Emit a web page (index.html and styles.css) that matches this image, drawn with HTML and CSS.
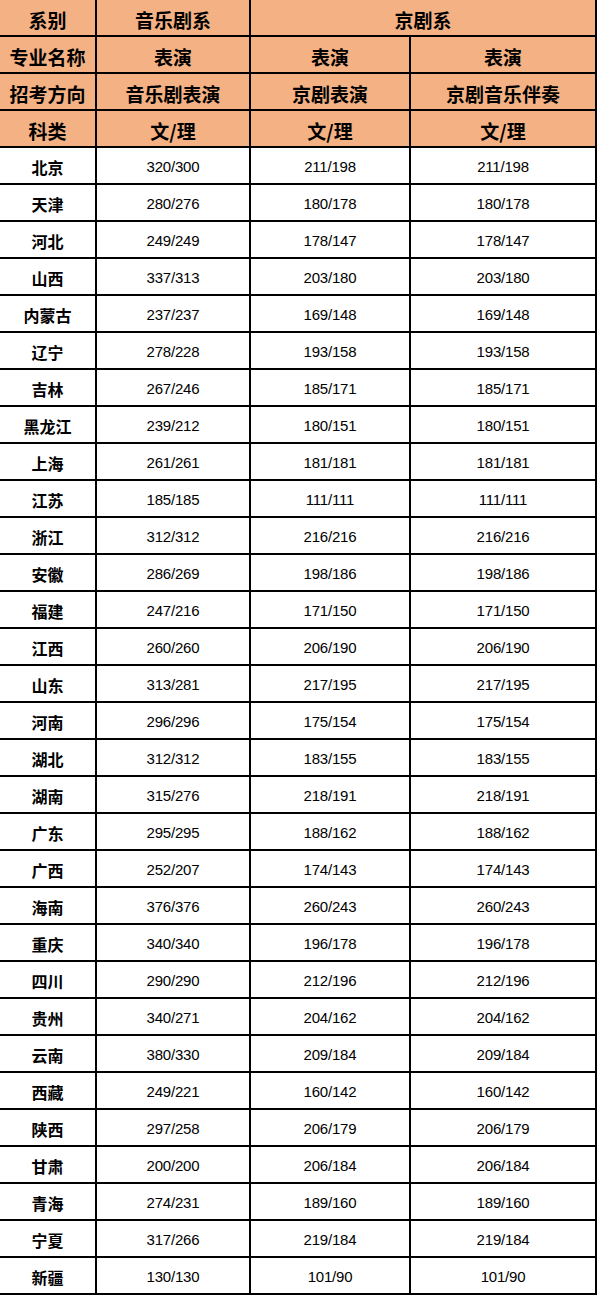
FILE: index.html
```html
<!DOCTYPE html>
<html lang="zh">
<head>
<meta charset="utf-8">
<title>录取分数线</title>
<link rel="stylesheet" href="styles.css">
</head>
<body>
<table class="score">
<colgroup>
<col class="c1"><col class="c2"><col class="c3"><col class="c4">
</colgroup>
<thead>
<tr><th>系别</th><th>音乐剧系</th><th colspan="2">京剧系</th></tr>
<tr><th>专业名称</th><th>表演</th><th>表演</th><th>表演</th></tr>
<tr><th>招考方向</th><th>音乐剧表演</th><th>京剧表演</th><th>京剧音乐伴奏</th></tr>
<tr><th>科类</th><th>文/理</th><th>文/理</th><th>文/理</th></tr>
</thead>
<tbody>
<tr><td class="prov">北京</td><td>320/300</td><td>211/198</td><td>211/198</td></tr>
<tr><td class="prov">天津</td><td>280/276</td><td>180/178</td><td>180/178</td></tr>
<tr><td class="prov">河北</td><td>249/249</td><td>178/147</td><td>178/147</td></tr>
<tr><td class="prov">山西</td><td>337/313</td><td>203/180</td><td>203/180</td></tr>
<tr><td class="prov">内蒙古</td><td>237/237</td><td>169/148</td><td>169/148</td></tr>
<tr><td class="prov">辽宁</td><td>278/228</td><td>193/158</td><td>193/158</td></tr>
<tr><td class="prov">吉林</td><td>267/246</td><td>185/171</td><td>185/171</td></tr>
<tr><td class="prov">黑龙江</td><td>239/212</td><td>180/151</td><td>180/151</td></tr>
<tr><td class="prov">上海</td><td>261/261</td><td>181/181</td><td>181/181</td></tr>
<tr><td class="prov">江苏</td><td>185/185</td><td>111/111</td><td>111/111</td></tr>
<tr><td class="prov">浙江</td><td>312/312</td><td>216/216</td><td>216/216</td></tr>
<tr><td class="prov">安徽</td><td>286/269</td><td>198/186</td><td>198/186</td></tr>
<tr><td class="prov">福建</td><td>247/216</td><td>171/150</td><td>171/150</td></tr>
<tr><td class="prov">江西</td><td>260/260</td><td>206/190</td><td>206/190</td></tr>
<tr><td class="prov">山东</td><td>313/281</td><td>217/195</td><td>217/195</td></tr>
<tr><td class="prov">河南</td><td>296/296</td><td>175/154</td><td>175/154</td></tr>
<tr><td class="prov">湖北</td><td>312/312</td><td>183/155</td><td>183/155</td></tr>
<tr><td class="prov">湖南</td><td>315/276</td><td>218/191</td><td>218/191</td></tr>
<tr><td class="prov">广东</td><td>295/295</td><td>188/162</td><td>188/162</td></tr>
<tr><td class="prov">广西</td><td>252/207</td><td>174/143</td><td>174/143</td></tr>
<tr><td class="prov">海南</td><td>376/376</td><td>260/243</td><td>260/243</td></tr>
<tr><td class="prov">重庆</td><td>340/340</td><td>196/178</td><td>196/178</td></tr>
<tr><td class="prov">四川</td><td>290/290</td><td>212/196</td><td>212/196</td></tr>
<tr><td class="prov">贵州</td><td>340/271</td><td>204/162</td><td>204/162</td></tr>
<tr><td class="prov">云南</td><td>380/330</td><td>209/184</td><td>209/184</td></tr>
<tr><td class="prov">西藏</td><td>249/221</td><td>160/142</td><td>160/142</td></tr>
<tr><td class="prov">陕西</td><td>297/258</td><td>206/179</td><td>206/179</td></tr>
<tr><td class="prov">甘肃</td><td>200/200</td><td>206/184</td><td>206/184</td></tr>
<tr><td class="prov">青海</td><td>274/231</td><td>189/160</td><td>189/160</td></tr>
<tr><td class="prov">宁夏</td><td>317/266</td><td>219/184</td><td>219/184</td></tr>
<tr><td class="prov">新疆</td><td>130/130</td><td>101/90</td><td>101/90</td></tr>
</tbody>
</table>
</body>
</html>
```
FILE: styles.css
```css
html, body {
  margin: 0;
  padding: 0;
  background: #ffffff;
}

.score {
  width: 597px;
  table-layout: fixed;
  border-collapse: separate;
  border-spacing: 0;
  color: #000000;
}

.c1 { width: 97px; }
.c2 { width: 154px; }
.c3 { width: 160px; }
.c4 { width: 186px; }

.score th,
.score td {
  box-sizing: border-box;
  height: 37px;
  padding: 2px 0 0;
  text-align: center;
  vertical-align: middle;
  border-right: 2px solid #000000;
  border-bottom: 2px solid #000000;
  white-space: nowrap;
}

.score th {
  padding-top: 4px;
  background: #f4b183;
  font-family: "Noto Sans CJK SC", sans-serif;
  font-weight: 700;
  font-size: 19px;
  line-height: 1;
}

.score td {
  font-family: "Liberation Sans", Arial, sans-serif;
  font-size: 15px;
  letter-spacing: -0.2px;
  line-height: 1;
}

.score td.prov {
  font-family: "Noto Sans CJK SC", sans-serif;
  font-weight: 700;
  font-size: 16px;
  letter-spacing: 0;
}
```
